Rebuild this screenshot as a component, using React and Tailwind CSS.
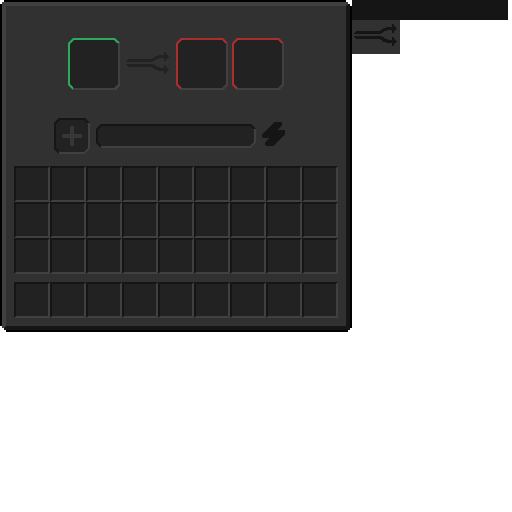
const BEVEL = {
  green: "bg-[#2eaa5c]",
  red: "bg-[#aa2e2e]",
  dark: "bg-[#151515]",
};

const CUT_OUTER =
  "[clip-path:polygon(5px_0,calc(100%-5px)_0,100%_5px,100%_calc(100%-5px),calc(100%-5px)_100%,5px_100%,0_calc(100%-5px),0_5px)]";
const CUT_INNER =
  "[clip-path:polygon(4px_0,calc(100%-4px)_0,100%_4px,100%_calc(100%-4px),calc(100%-4px)_100%,4px_100%,0_calc(100%-4px),0_4px)]";
const SHADE =
  "bg-[image:linear-gradient(#404040,#404040)] bg-no-repeat bg-[position:5px_5px]";

function Bevel({ as: Tag = "div", tone, className, children, ...rest }) {
  return (
    <Tag className={`block p-0.5 ${BEVEL[tone]} ${SHADE} ${CUT_OUTER} ${className}`} {...rest}>
      <span className={`flex h-full w-full items-center justify-center bg-[#222222] ${CUT_INNER}`}>
        {children}
      </span>
    </Tag>
  );
}

function SplitArrow({ color }) {
  return (
    <svg className="block h-6 w-11" viewBox="0 0 44 24" fill={color} shapeRendering="crispEdges" aria-hidden="true">
      <path d="M2 8h23l2-1 3-2 3-1h5V1h1l1 1v1h1v1h1v1h1v1h-1v1h-1v1h-1v1l-1 1h-1V7h-4l-3 1-3 2-2 1H0V10z" />
      <path d="M0 13h27l2 1 3 2 3 1h3v-3h1l1 1v1h1v1h1v1h1v1h-1v1h-1v1h-1v1l-1 1h-1v-3h-5l-3-1-3-2-2-1H2l-2-2z" />
    </svg>
  );
}

function Slot() {
  return (
    <button
      type="button"
      aria-label="Slot"
      className="h-9 w-9 border-2 border-t-[#151515] border-r-[#404040] border-b-[#404040] border-l-[#151515] bg-[#222222]"
    />
  );
}

function SlotGrid({ rows }) {
  return (
    <div className="grid grid-cols-[repeat(9,36px)]">
      {Array.from({ length: rows * 9 }, (_, i) => (
        <Slot key={i} />
      ))}
    </div>
  );
}

export default function App() {
  return (
    <div className="flex min-h-screen items-start bg-white">
      <main className="shrink-0 bg-black p-0.5 [clip-path:polygon(4px_0,calc(100%-6px)_0,calc(100%-6px)_2px,calc(100%-4px)_2px,calc(100%-4px)_4px,calc(100%-2px)_4px,calc(100%-2px)_6px,100%_6px,100%_calc(100%-4px),calc(100%-2px)_calc(100%-4px),calc(100%-2px)_calc(100%-2px),calc(100%-4px)_calc(100%-2px),calc(100%-4px)_100%,6px_100%,6px_calc(100%-2px),4px_calc(100%-2px),4px_calc(100%-4px),2px_calc(100%-4px),2px_calc(100%-6px),0_calc(100%-6px),0_4px,2px_4px,2px_2px,4px_2px)]">
        <div className="border-4 border-t-[#404040] border-r-[#151515] border-b-[#151515] border-l-[#404040] bg-[#313131] px-2 pt-8 pb-2">
          <section className="flex items-center pl-[54px]">
            <Bevel as="button" type="button" aria-label="Input" tone="green" className="h-[52px] w-[52px]" />
            <div className="mx-1.5 pb-0.5">
              <SplitArrow color="#222222" />
            </div>
            <div className="flex gap-1">
              <Bevel as="button" type="button" aria-label="First output" tone="red" className="h-[52px] w-[52px]" />
              <Bevel as="button" type="button" aria-label="Second output" tone="red" className="h-[52px] w-[52px]" />
            </div>
          </section>
          <section className="mt-7 flex items-center gap-1.5 pl-10">
            <Bevel as="button" type="button" aria-label="Add upgrade" tone="dark" className="h-9 w-9">
              <svg className="h-5 w-5" viewBox="0 0 20 20" fill="#363636" shapeRendering="crispEdges" aria-hidden="true">
                <path d="M9 0h2l1 1v7h7l1 1v2l-1 1h-7v7l-1 1H9l-1-1v-7H1l-1-1V9l1-1h7V1z" />
              </svg>
            </Bevel>
            <Bevel tone="dark" className="h-6 w-40" role="meter" aria-label="Energy" aria-valuenow={0} aria-valuemin={0} aria-valuemax={100} />
            <svg className="mb-1 h-6 w-6" viewBox="0 0 24 24" fill="#151515" shapeRendering="crispEdges" aria-hidden="true">
              <path d="M12 0h7l1 1v2l-4 5h6l1 1v3L11 24H4l-1-1v-2l4-5H1l-1-1v-2z" />
            </svg>
          </section>
          <section className="mt-3 flex flex-col gap-2">
            <SlotGrid rows={3} />
            <SlotGrid rows={1} />
          </section>
        </div>
      </main>
      <aside className="mr-1 min-w-0 flex-1">
        <div className="h-5 bg-[#151515]" />
        <div className="h-[34px] w-12 bg-[#313131] px-0.5 pt-[3px]">
          <SplitArrow color="#151515" />
        </div>
      </aside>
    </div>
  );
}
